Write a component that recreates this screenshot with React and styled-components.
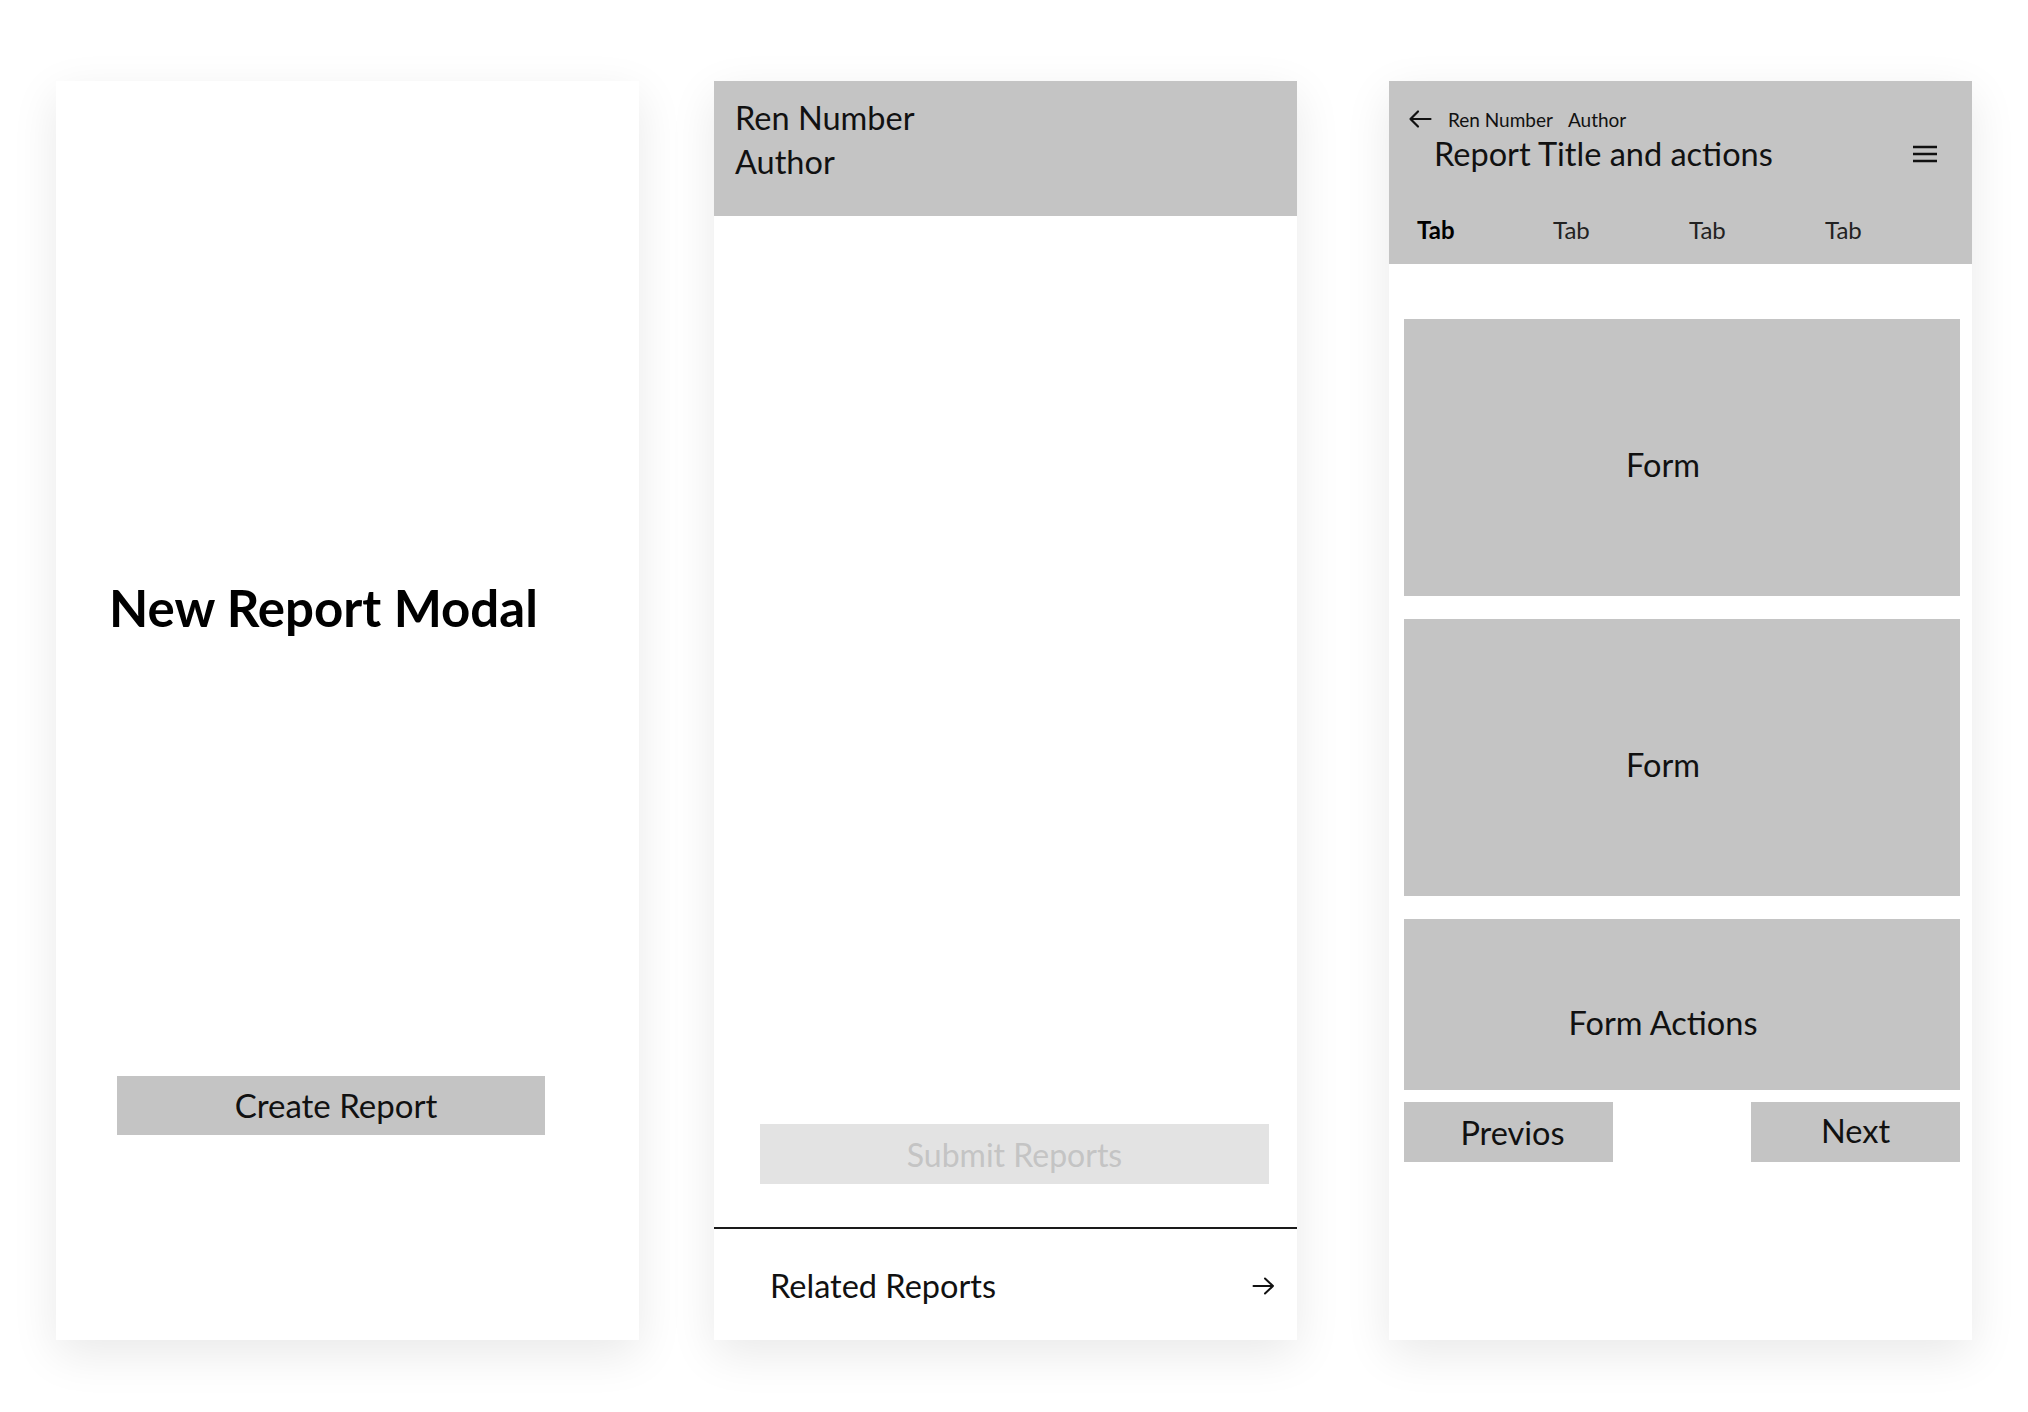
import React from "react";
import styled, { createGlobalStyle } from "styled-components";

const GlobalStyle = createGlobalStyle`
  html, body {
    margin: 0;
    padding: 0;
    background: #ffffff;
  }
  body {
    font-family: "Lato", "Open Sans", "Liberation Sans", sans-serif;
    color: #111111;
  }
`;

const GRAY = "#c4c4c4";

function App() {
  return (
    <>
      <GlobalStyle />
      <Stage>
        <Phone>
          <ModalBody>
            <ModalTitle>New Report Modal</ModalTitle>
            <CreateButton>Create Report</CreateButton>
          </ModalBody>
        </Phone>

        <Phone>
          <SummaryHeader>
            <HeaderLine>Ren Number</HeaderLine>
            <HeaderLine>Author</HeaderLine>
          </SummaryHeader>
          <Spacer />
          <SubmitButton disabled>Submit Reports</SubmitButton>
          <Divider />
          <RelatedRow>
            <span>Related Reports</span>
            <svg width="23" height="20" viewBox="0 0 23 20" fill="none">
              <path
                d="M1.5 10H21M13 2.5L21 10L13 17.5"
                stroke="#111"
                strokeWidth="2"
                strokeLinecap="round"
                strokeLinejoin="round"
              />
            </svg>
          </RelatedRow>
        </Phone>

        <Phone $shift={17}>
          <ReportHeader>
            <MetaRow>
              <svg width="24" height="20" viewBox="0 0 24 20" fill="none">
                <path
                  d="M22.5 10H2.5M10 2.5L2.5 10L10 17.5"
                  stroke="#111"
                  strokeWidth="2.2"
                  strokeLinecap="round"
                  strokeLinejoin="round"
                />
              </svg>
              <MetaText>Ren Number</MetaText>
              <MetaText>Author</MetaText>
            </MetaRow>
            <TitleRow>
              <ReportTitle>Report Title and actions</ReportTitle>
              <svg width="24" height="18" viewBox="0 0 24 18" fill="none">
                <path
                  d="M0 2H24M0 9H24M0 16H24"
                  stroke="#111"
                  strokeWidth="2.4"
                />
              </svg>
            </TitleRow>
            <Tabs>
              <Tab $active>Tab</Tab>
              <Tab>Tab</Tab>
              <Tab>Tab</Tab>
              <Tab>Tab</Tab>
            </Tabs>
          </ReportHeader>
          <FormStack>
            <Block $h={277} $padTop={13}>Form</Block>
            <Block $h={277} $padTop={13}>Form</Block>
            <Block $h={171} $padTop={36}>Form Actions</Block>
            <StepRow>
              <StepButton $nudge={8}>Previos</StepButton>
              <StepButton $lift={3}>Next</StepButton>
            </StepRow>
          </FormStack>
        </Phone>
      </Stage>
    </>
  );
}

const Stage = styled.div`
  display: flex;
  align-items: flex-start;
  gap: 75px;
  padding: 81px 0 0 56px;
  min-height: 1412px;
  box-sizing: border-box;
`;

const Phone = styled.section`
  width: 583px;
  height: 1259px;
  margin-left: ${(p) => p.$shift || 0}px;
  background: #ffffff;
  box-shadow: 0 14px 44px rgba(0, 0, 0, 0.09);
  display: flex;
  flex-direction: column;
  overflow: hidden;
`;

/* first screen */
const ModalBody = styled.div`
  display: flex;
  flex-direction: column;
  padding: 496px 0 0 53px;
`;

const ModalTitle = styled.h1`
  margin: 0;
  font-size: 51px;
  line-height: 62px;
  font-weight: 700;
  color: #000;
`;

const CreateButton = styled.button`
  margin: 437px 0 0 8px;
  width: 428px;
  height: 59px;
  border: 0;
  background: ${GRAY};
  font-family: inherit;
  font-size: 33px;
  color: #111;
  padding: 0 0 2px 10px;
`;

/* second screen */
const SummaryHeader = styled.header`
  height: 135px;
  box-sizing: border-box;
  background: ${GRAY};
  padding: 15px 21px 0;
`;

const HeaderLine = styled.div`
  font-size: 32.5px;
  line-height: 44px;
`;

const Spacer = styled.div`
  flex: 1;
`;

const SubmitButton = styled.button`
  margin: 0 28px 43px 46px;
  height: 60px;
  border: 0;
  background: #e3e3e3;
  color: #c4c4c4;
  font-family: inherit;
  font-size: 32px;
  padding: 0;
`;

const Divider = styled.hr`
  margin: 0;
  border: 0;
  height: 2px;
  background: #1a1a1a;
`;

const RelatedRow = styled.div`
  height: 111px;
  display: flex;
  align-items: center;
  justify-content: space-between;
  padding: 2px 22px 0 56px;
  box-sizing: border-box;
  font-size: 32.5px;
  color: #111;
`;

/* third screen */
const ReportHeader = styled.header`
  height: 183px;
  box-sizing: border-box;
  background: ${GRAY};
  padding-top: 26px;
`;

const MetaRow = styled.div`
  display: flex;
  align-items: center;
  gap: 15px;
  height: 24px;
  padding-left: 19px;

  svg {
    margin-right: 1px;
  }
`;

const MetaText = styled.span`
  font-size: 19px;
`;

const TitleRow = styled.div`
  display: flex;
  align-items: center;
  justify-content: space-between;
  height: 40px;
  margin-top: 3px;
  padding: 0 35px 0 45px;
`;

const ReportTitle = styled.h2`
  margin: 0;
  font-size: 32.5px;
  font-weight: 400;
  line-height: 40px;
`;

const Tabs = styled.nav`
  display: grid;
  grid-template-columns: repeat(4, 136px);
  margin-top: 35px;
  padding-left: 28px;
  height: 40px;
  align-items: center;
`;

const Tab = styled.span`
  font-size: 24px;
  font-weight: ${(p) => (p.$active ? 700 : 400)};
  color: ${(p) => (p.$active ? "#000" : "#222")};
`;

const FormStack = styled.div`
  display: flex;
  flex-direction: column;
  gap: 23px;
  padding: 55px 12px 0 15px;
`;

const Block = styled.div`
  height: ${(p) => p.$h}px;
  box-sizing: border-box;
  background: ${GRAY};
  display: flex;
  align-items: center;
  justify-content: center;
  padding: ${(p) => p.$padTop}px 38px 0 0;
  font-size: 32.5px;
  color: #111;
`;

const StepRow = styled.div`
  display: flex;
  justify-content: space-between;
  margin-top: -11px;
`;

const StepButton = styled.button`
  width: 209px;
  height: 60px;
  border: 0;
  background: ${GRAY};
  font-family: inherit;
  font-size: 32.5px;
  color: #111;
  padding: 0 0 ${(p) => p.$lift || 0}px ${(p) => p.$nudge || 0}px;
`;

export default App;
